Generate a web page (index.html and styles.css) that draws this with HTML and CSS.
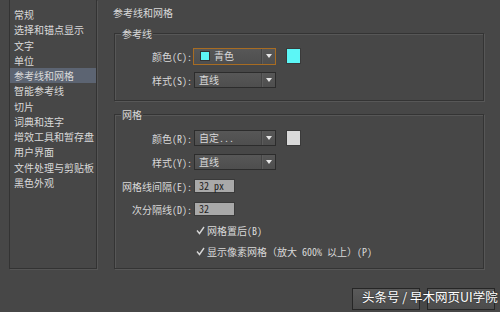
FILE: index.html
```html
<!DOCTYPE html>
<html lang="zh-CN">
<head>
<meta charset="utf-8">
<title>参考线和网格</title>
<link rel="stylesheet" href="styles.css">
</head>
<body>
<div class="layout">
  <ul class="sidebar">
    <li>常规</li>
    <li>选择和锚点显示</li>
    <li>文字</li>
    <li>单位</li>
    <li class="active">参考线和网格</li>
    <li>智能参考线</li>
    <li>切片</li>
    <li>词典和连字</li>
    <li>增效工具和暂存盘</li>
    <li>用户界面</li>
    <li>文件处理与剪贴板</li>
    <li>黑色外观</li>
  </ul>
  <div class="main">
    <div class="title">参考线和网格</div>
    <div class="group g1">
      <span class="legend">参考线</span>
      <div class="row h24">
        <span class="label">颜色(C):</span>
        <div class="field">
          <div class="select focus"><span class="mini cyan"></span><span class="val">青色</span><span class="arrow"></span></div>
          <span class="swatch cyan"></span>
        </div>
      </div>
      <div class="row h24">
        <span class="label">样式(S):</span>
        <div class="field">
          <div class="select"><span class="val">直线</span><span class="arrow"></span></div>
        </div>
      </div>
    </div>
    <div class="group g2">
      <span class="legend">网格</span>
      <div class="row h24">
        <span class="label">颜色(R):</span>
        <div class="field">
          <div class="select"><span class="val">自定...</span><span class="arrow"></span></div>
          <span class="swatch gray"></span>
        </div>
      </div>
      <div class="row h24">
        <span class="label">样式(Y):</span>
        <div class="field">
          <div class="select"><span class="val">直线</span><span class="arrow"></span></div>
        </div>
      </div>
      <div class="row h24">
        <span class="label">网格线间隔(E):</span>
        <div class="field"><div class="input">32 px</div></div>
      </div>
      <div class="row h22">
        <span class="label">次分隔线(D):</span>
        <div class="field"><div class="input">32</div></div>
      </div>
      <div class="row h21">
        <span class="label"></span>
        <div class="field check">
          <svg class="tick" width="9" height="9" viewBox="0 0 9 9"><path d="M1 4.5 L3.5 7.5 L8 1" fill="none" stroke="#d6d6d6" stroke-width="1.4"/></svg>
          <span>网格置后(B)</span>
        </div>
      </div>
      <div class="row h20">
        <span class="label"></span>
        <div class="field check">
          <svg class="tick" width="9" height="9" viewBox="0 0 9 9"><path d="M1 4.5 L3.5 7.5 L8 1" fill="none" stroke="#d6d6d6" stroke-width="1.4"/></svg>
          <span>显示像素网格（放大 600% 以上）(P)</span>
        </div>
      </div>
    </div>
  </div>
</div>
<div class="footer">
  <div class="btn" aria-label="确定"></div>
  <div class="btn" aria-label="取消"></div>
</div>
<div class="watermark">头条号 / 早木网页UI学院</div>
</body>
</html>
```

FILE: styles.css
```css
* { box-sizing: border-box; }
html, body {
  margin: 0;
  padding: 0;
}
body {
  width: 500px;
  height: 312px;
  overflow: hidden;
  background: #474747;
  color: #d9d9d9;
  font-family: "Noto Sans Mono CJK SC", "Noto Sans CJK SC", "Noto Sans", sans-serif;
  font-size: 10px;
  position: relative;
}
.layout {
  display: flex;
  padding-left: 9px;
  height: 269px;
}
.sidebar {
  list-style: none;
  margin: 0;
  padding: 7px 0 0 0;
  width: 88px;
  height: 269px;
  border: 1px solid #333;
  border-top: none;
  box-shadow: 1px 1px 0 #555;
}
.sidebar li {
  height: 15.25px;
  line-height: 15.25px;
  padding-left: 4px;
  white-space: nowrap;
}
.sidebar li.active {
  background: #5c6472;
}
.main {
  margin-left: 16px;
  width: 371px;
  padding-top: 5px;
}
.title {
  line-height: 15px;
  height: 15px;
}
.group {
  position: relative;
  border: 1px solid #343434;
  box-shadow: 1px 1px 0 #575757, inset 1px 1px 0 #575757;
  width: 370px;
  margin-left: 1px;
}
.g1 {
  margin-top: 13px;
  padding: 10px 0 7px 0;
  height: 68px;
}
.g2 {
  margin-top: 13px;
  padding: 11px 0 6px 0;
  height: 155px;
}
.legend {
  position: absolute;
  left: 6px;
  top: -8px;
  line-height: 15px;
  padding: 0 1px;
  background: #474747;
}
.row {
  display: grid;
  grid-template-columns: 77px auto;
  column-gap: 2px;
  align-items: center;
}
.h24 { height: 24px; }
.h22 { height: 22px; }
.h21 { height: 21px; }
.h20 { height: 20px; }
.label {
  text-align: right;
  white-space: nowrap;
}
.field {
  display: flex;
  align-items: center;
}
.select {
  position: relative;
  display: flex;
  align-items: center;
  width: 82px;
  height: 16px;
  border: 1px solid #2c2c2c;
  background: linear-gradient(#575757, #4e4e4e);
  padding-left: 4px;
}
.select.focus {
  border-color: #a86c22;
  height: 17px;
  margin-left: -1px;
  width: 83px;
}
.mini {
  width: 10px;
  height: 10px;
  margin: 0 4px 0 2px;
  border: 1px solid #333;
}
.val {
  flex: 1;
  line-height: 14px;
}
.arrow {
  width: 14px;
  height: 100%;
  border-left: 1px solid #444;
  box-shadow: inset 1px 0 0 #5c5c5c;
  position: relative;
}
.arrow::after {
  content: "";
  position: absolute;
  left: 4px;
  top: 5px;
  border-left: 3px solid transparent;
  border-right: 3px solid transparent;
  border-top: 4px solid #e6e6e6;
}
.swatch {
  width: 15px;
  height: 16px;
  margin-left: 10px;
  border: 1px solid #3a3a3a;
}
.cyan { background: #5cf6f6; }
.gray { background: #d9d9d9; }
.input {
  width: 41px;
  height: 14px;
  background: #a9a9a9;
  border: 1px solid #3a3a3a;
  color: #1e1e1e;
  line-height: 12px;
  padding-left: 4px;
  white-space: pre;
}
.check {
  padding-left: 2px;
}
.tick {
  margin-right: 2px;
}
.footer {
  display: flex;
  justify-content: flex-end;
  gap: 7px;
  padding-right: 5px;
  margin-top: 19px;
}
.btn {
  width: 68px;
  height: 22px;
  border: 1px solid #262626;
  background: linear-gradient(#5a5a5a, #4c4c4c);
}
.watermark {
  position: absolute;
  left: 362px;
  top: 288px;
  font-family: "Noto Sans CJK SC", sans-serif;
  font-size: 12.5px;
  line-height: 18px;
  color: #ffffff;
  white-space: nowrap;
  text-shadow: 0 0 2px rgba(0,0,0,0.6);
}
```
